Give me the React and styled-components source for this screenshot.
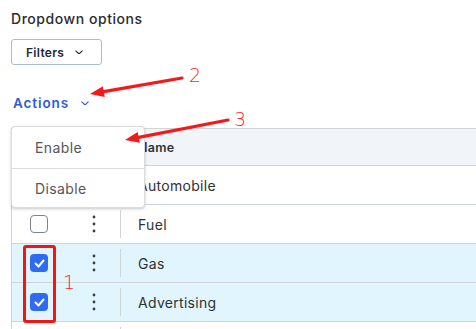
import React from "react";
import styled, { createGlobalStyle } from "styled-components";

const GlobalStyle = createGlobalStyle`
  html, body {
    margin: 0;
    padding: 0;
    background: #ffffff;
    overflow: hidden;
  }
  body {
    font-family: Inter, "Noto Sans", sans-serif;
    color: #313131;
  }
`;

const Page = styled.div`
  position: relative;
  width: 476px;
  height: 329px;
  overflow: hidden;
  padding: 0 0 0 11px;
  box-sizing: border-box;
  display: flex;
  flex-direction: column;

  & > * {
    flex-shrink: 0;
  }
`;

const Title = styled.div`
  margin-top: 9px;
  height: 20px;
  line-height: 20px;
  font-size: 14px;
  font-weight: 500;
  letter-spacing: 0.55px;
  color: #2b2b2b;
`;

const FilterButton = styled.button`
  margin-top: 10px;
  width: 91px;
  height: 26px;
  box-sizing: border-box;
  border: 1px solid #a9bdd3;
  border-radius: 3px;
  background: #fff;
  display: flex;
  align-items: center;
  padding: 0 0 0 14px;
  gap: 11px;
  font-family: inherit;
  font-size: 12px;
  font-weight: 600;
  letter-spacing: 0.3px;
  color: #1f2a36;
`;

const ActionsToggle = styled.div`
  margin-top: 29px;
  height: 18px;
  display: flex;
  align-items: center;
  gap: 12px;
  padding-left: 2px;
  font-size: 13.5px;
  font-weight: 600;
  letter-spacing: 0.9px;
  color: #2d5bd8;
`;

const Table = styled.div`
  margin-top: 16px;
  width: 620px;
  border-left: 1px solid #cfd4d9;
  border-top: 1px solid #cfd4d9;
`;

const Row = styled.div`
  display: grid;
  grid-template-columns: 56px 52px 1fr;
  height: ${(p) => (p.header ? 36 : 38)}px;
  border-bottom: 1px solid #cfd4d9;
  background: ${(p) => (p.header ? "#f1f4f8" : p.selected ? "#e0f5fd" : "#ffffff")};
`;

const Cell = styled.div`
  display: flex;
  align-items: center;
  justify-content: ${(p) => (p.center ? "center" : "flex-start")};
  position: relative;
  padding-left: ${(p) => (p.center ? 0 : 18)}px;
  font-size: ${(p) => (p.header ? 12.5 : 14)}px;
  font-weight: ${(p) => (p.header ? 600 : 400)};
  color: #313131;
  letter-spacing: 0.3px;

  ${(p) =>
    p.divider &&
    `&::before {
      content: "";
      position: absolute;
      left: 0;
      top: 5px;
      bottom: 5px;
      width: 1px;
      background: #cfd4d9;
    }`}
`;

const Check = styled.div`
  width: 18px;
  height: 18px;
  margin-left: -2px;
  box-sizing: border-box;
  border-radius: 4px;
  border: ${(p) => (p.checked ? "none" : "1px solid #7b848c")};
  background: ${(p) => (p.checked ? "#2f6bf2" : "#fff")};
  display: flex;
  align-items: center;
  justify-content: center;
`;

const Menu = styled.div`
  position: absolute;
  left: 11px;
  top: 126px;
  width: 134px;
  background: #fff;
  border: 1px solid #dcdcdc;
  border-radius: 4px;
  box-shadow: 0 1px 3px rgba(0, 0, 0, 0.22);
  box-sizing: border-box;
  z-index: 3;
`;

const MenuItem = styled.div`
  height: ${(p) => p.h}px;
  display: flex;
  align-items: center;
  padding-left: 23px;
  font-size: 14px;
  color: #565656;
  letter-spacing: 0.4px;
  border-top: ${(p) => (p.first ? "none" : "1px solid #dcdcdc")};
`;

const Annotations = styled.svg`
  position: absolute;
  left: 0;
  top: 0;
  width: 476px;
  height: 329px;
  pointer-events: none;
  z-index: 5;
`;

const Mark = styled.span`
  position: absolute;
  left: ${(p) => p.x}px;
  top: ${(p) => p.y}px;
  font-family: "DejaVu Sans", sans-serif;
  font-weight: 200;
  font-size: 19px;
  line-height: 19px;
  color: #f22a2a;
  z-index: 6;
`;

const Highlight = styled.div`
  position: absolute;
  left: 23px;
  top: 245px;
  width: 33px;
  height: 78px;
  box-sizing: border-box;
  border: 3px solid #f51414;
  border-radius: 3px;
  z-index: 6;
`;

const Chevron = ({ color = "#1f2a36", size = 8 }) => (
  <svg width={size} height={size * 0.6} viewBox="0 0 10 6" fill="none">
    <path d="M1 1l4 4 4-4" stroke={color} strokeWidth="1.4" strokeLinecap="round" strokeLinejoin="round" />
  </svg>
);

const Dots = () => (
  <svg width="4" height="18" viewBox="0 0 4 18">
    <circle cx="2" cy="2" r="1.4" fill="#3d3d3d" />
    <circle cx="2" cy="9" r="1.4" fill="#3d3d3d" />
    <circle cx="2" cy="16" r="1.4" fill="#3d3d3d" />
  </svg>
);

const Tick = () => (
  <svg width="11" height="9" viewBox="0 0 11 9" fill="none">
    <path d="M1.5 4.5l3 3 5-6" stroke="#fff" strokeWidth="2" strokeLinecap="round" strokeLinejoin="round" />
  </svg>
);

const Arrow = ({ x1, y1, x2, y2 }) => {
  const dx = x2 - x1;
  const dy = y2 - y1;
  const len = Math.hypot(dx, dy);
  const ux = dx / len;
  const uy = dy / len;
  const bx = x2 - ux * 14;
  const by = y2 - uy * 14;
  const px = -uy * 5.5;
  const py = ux * 5.5;
  return (
    <g>
      <line x1={x1} y1={y1} x2={bx} y2={by} stroke="#f21a1a" strokeWidth="3.2" strokeLinecap="round" />
      <polygon points={`${x2},${y2} ${bx + px},${by + py} ${bx - px},${by - py}`} fill="#f21a1a" />
    </g>
  );
};

const rows = [
  { name: "Automobile", selected: false },
  { name: "Fuel", selected: false },
  { name: "Gas", selected: true },
  { name: "Advertising", selected: true },
  { name: "", selected: false },
];

export default function App() {
  return (
    <>
      <GlobalStyle />
      <Page>
        <Title>Dropdown options</Title>
        <FilterButton>
          Filters <Chevron />
        </FilterButton>
        <ActionsToggle>
          Actions <Chevron color="#2d5bd8" />
        </ActionsToggle>
        <Table>
          <Row header>
            <Cell center />
            <Cell center />
            <Cell header divider>Name</Cell>
          </Row>
          {rows.map((r, i) => (
            <Row key={i} selected={r.selected}>
              <Cell center>
                <Check checked={r.selected}>{r.selected && <Tick />}</Check>
              </Cell>
              <Cell center>
                <Dots />
              </Cell>
              <Cell divider>{r.name}</Cell>
            </Row>
          ))}
        </Table>

        <Menu>
          <MenuItem first h={41}>Enable</MenuItem>
          <MenuItem h={38}>Disable</MenuItem>
        </Menu>

        <Highlight />
        <Mark x={189} y={66}>2</Mark>
        <Mark x={234} y={110}>3</Mark>
        <Mark x={63} y={273}>1</Mark>
        <Annotations viewBox="0 0 476 329">
          <Arrow x1={182} y1={78} x2={90} y2={94} />
          <Arrow x1={228} y1={120} x2={125} y2={140} />
        </Annotations>
      </Page>
    </>
  );
}
